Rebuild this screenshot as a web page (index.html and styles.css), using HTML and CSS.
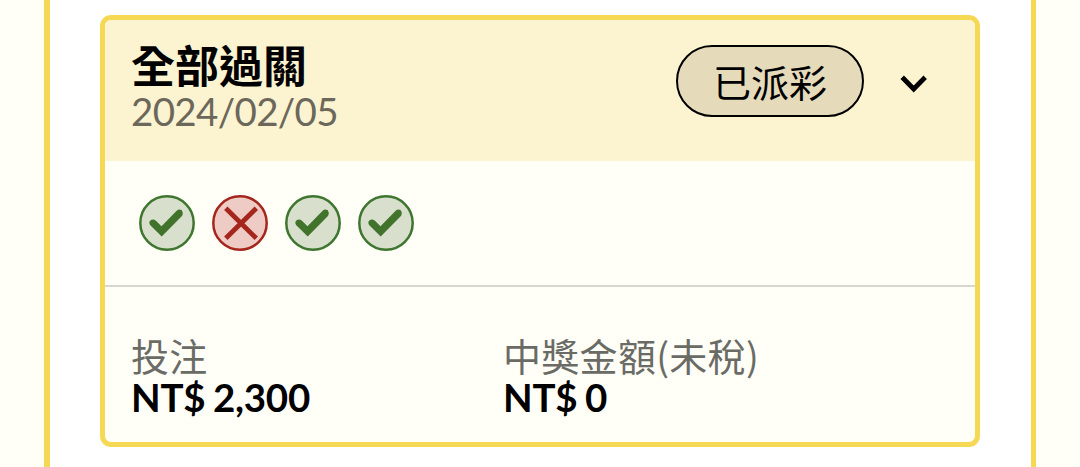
FILE: index.html
```html
<!DOCTYPE html>
<html lang="zh-Hant">
<head>
  <meta charset="UTF-8">
  <title>投注紀錄</title>
  <meta name="viewport" content="width=device-width, initial-scale=1">
  <link rel="stylesheet" href="styles.css">
</head>
<body>
  <!-- Shared icons -->
  <svg class="icon-defs" width="0" height="0">
    <symbol id="icon-win" viewBox="0 0 56 56">
      <circle cx="28" cy="28" r="26.7" fill="#d8e0cd" stroke="#3f762f" stroke-width="2.5"/>
      <path d="M11.3 25.5Q14 23.2 17 25.8L22.5 31.2L37.4 15.9Q40 13.6 42.8 15.2Q44.8 18 43.2 20.8L22.7 41.6L11.3 30.2Q9.4 27.7 11.3 25.5Z" fill="#41732c"/>
    </symbol>
    <symbol id="icon-lose" viewBox="0 0 56 56">
      <circle cx="28" cy="28" r="26.7" fill="#efcbc5" stroke="#a5261d" stroke-width="2.5"/>
      <path d="M13.8 13.3L44.3 43.3M44.3 13.3L13.8 43.3" fill="none" stroke="#a5261d" stroke-width="4.8"/>
    </symbol>
  </svg>

  <main class="panel">
    <section class="bet-card">
      <header class="bet-header">
        <div class="bet-title">
          <h2>全部過關</h2>
          <div class="bet-date">2024/02/05</div>
        </div>
        <div class="bet-status">已派彩</div>
        <svg class="chevron" viewBox="0 0 28 20">
          <path d="M2.2 3.3L13.7 15L25.2 3.3" fill="none" stroke="#000" stroke-width="4.8"/>
        </svg>
      </header>

      <!-- Result of each leg -->
      <div class="bet-legs">
        <svg class="leg"><use href="#icon-win"/></svg>
        <svg class="leg"><use href="#icon-lose"/></svg>
        <svg class="leg"><use href="#icon-win"/></svg>
        <svg class="leg"><use href="#icon-win"/></svg>
      </div>

      <div class="bet-amounts">
        <div class="amount">
          <div class="amount-label">投注</div>
          <div class="amount-value">NT$ 2,300</div>
        </div>
        <div class="amount">
          <div class="amount-label">中獎金額(未稅)</div>
          <div class="amount-value">NT$ 0</div>
        </div>
      </div>
    </section>
  </main>
</body>
</html>
```

FILE: styles.css
```css
* {
  box-sizing: border-box;
}
body {
  margin: 0;
  height: 467px;
  overflow: hidden;
  background-color: #fffef7;
  color: #000;
  font-family: Lato, "Noto Sans CJK TC", sans-serif;
}
.icon-defs {
  display: block;
}
.panel {
  height: 467px;
  margin: 0 44px;
  padding: 15px 51px 0 50px;
  background-color: #fff;
  border-left: 6px solid #f5d854;
  border-right: 5px solid #f5d854;
}
/* Bet card */
.bet-card {
  height: 432px;
  background-color: #fffff7;
  border: 5px solid #f5d854;
  border-radius: 11px;
  overflow: hidden;
}
.bet-header {
  display: flex;
  align-items: flex-start;
  height: 141px;
  padding: 25px 47px 0 26px;
  background-color: #fcf3d1;
}
.bet-title {
  flex: 1;
}
.bet-title h2 {
  margin: -1px 0 0;
  font-size: 44px;
  font-weight: bold;
  line-height: 44px;
}
.bet-date {
  font-size: 38.5px;
  line-height: 46px;
  letter-spacing: -0.65px;
  color: #6b675a;
}
.bet-status {
  width: 188px;
  height: 72px;
  border: 2.5px solid #000;
  border-radius: 36px;
  background-color: #e5dbbb;
  font-size: 38px;
  line-height: 70px;
  text-align: center;
}
.chevron {
  width: 28px;
  height: 20px;
  margin: 29px 0 0 36px;
}
/* Leg results */
.bet-legs {
  display: flex;
  gap: 17px;
  height: 126px;
  padding: 34px 0 0 34px;
  border-bottom: 2px solid #d7d7d1;
}
.leg {
  width: 56px;
  height: 56px;
}
/* Amounts */
.bet-amounts {
  display: grid;
  grid-template-columns: 372px 1fr;
  padding: 47px 26px 0;
}
.amount-label {
  font-family: "Noto Sans CJK TC", sans-serif;
  font-size: 38px;
  line-height: 42px;
  letter-spacing: 0.3px;
  color: #6b6b66;
}
.amount-value {
  font-size: 38.5px;
  font-weight: bold;
  line-height: 42px;
  letter-spacing: -0.25px;
  word-spacing: -1.5px;
}
```
